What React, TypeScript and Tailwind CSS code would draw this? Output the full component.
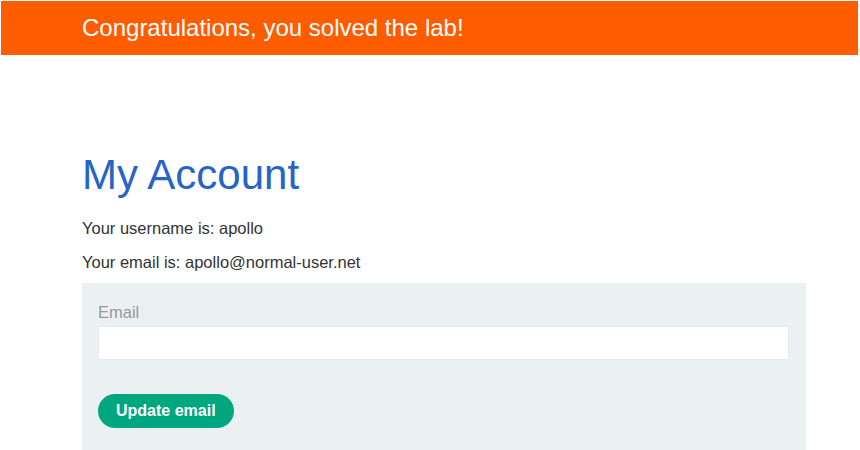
export default function App() {
  return (
    <div className="h-[450px] bg-white font-['Liberation_Sans',Arial,sans-serif] overflow-hidden">
      {/* lab solved banner */}
      <div className="ml-px mt-px w-[857px] h-[54px] bg-[#ff5c00] flex items-center pl-[81px]">
        <span className="text-[24px] leading-none text-white">Congratulations, you solved the lab!</span>
      </div>

      <div className="pl-[82px] pt-[95px]">
        <h1 className="text-[42px] leading-[50px] text-[#2764c6]">My Account</h1>
        <p className="mt-[18px] text-[16.5px] leading-[20px] text-[#333]">Your username is: apollo</p>
        <p className="mt-[14px] text-[16.5px] leading-[20px] text-[#333]">Your email is: apollo@normal-user.net</p>

        <form className="mt-[11px] w-[724px] h-[167px] bg-[#ebf0f2] px-4 pt-[19px] flex flex-col items-start">
          <label className="text-[16.5px] leading-[20px] text-[#999]">Email</label>
          <input
            type="email"
            className="mt-[4px] w-[691px] h-[34px] bg-white border border-[#e6e9eb] outline-none"
          />
          <button
            type="button"
            className="mt-[34px] h-[34px] px-[18px] rounded-full bg-[#00a67e] text-white font-bold text-[16px]"
          >
            Update email
          </button>
        </form>
      </div>
    </div>
  );
}
